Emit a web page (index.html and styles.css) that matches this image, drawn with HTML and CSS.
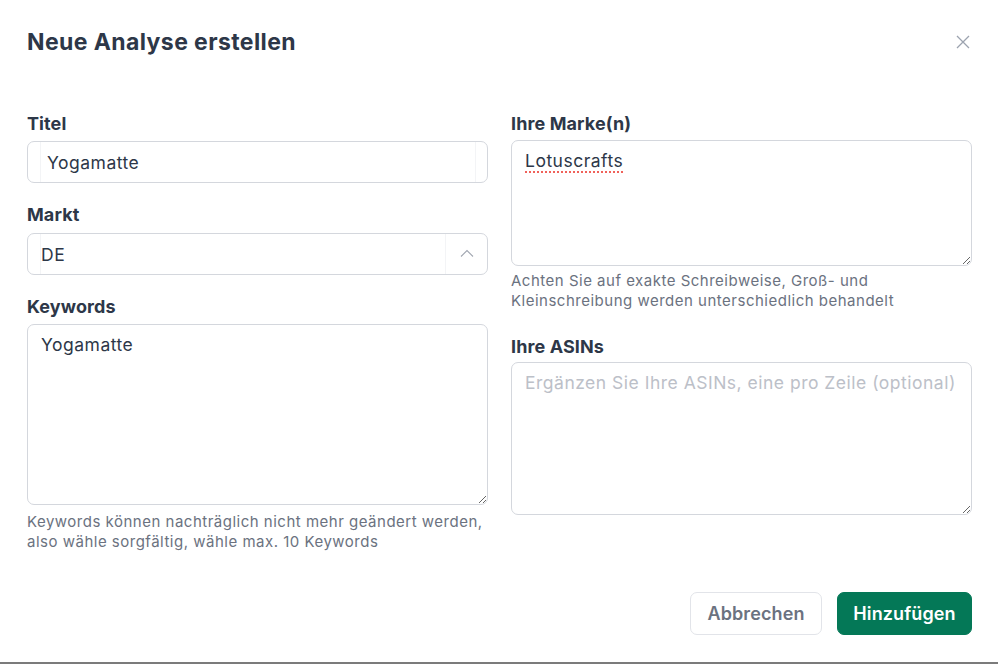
FILE: index.html
```html
<!DOCTYPE html>
<html lang="de">
<head>
<meta charset="utf-8">
<title>Neue Analyse erstellen</title>
<link rel="stylesheet" href="styles.css">
</head>
<body>
<div class="modal">
  <header class="modal-head">
    <h1 class="modal-title">Neue Analyse erstellen</h1>
    <button class="close" aria-label="Schließen">
      <svg width="14" height="14" viewBox="0 0 14 14"><path d="M1 1L13 13M13 1L1 13" stroke="#9ca3af" stroke-width="1.3" fill="none"/></svg>
    </button>
  </header>
  <div class="form">
    <div class="col">
      <label class="label">Titel</label>
      <div class="input input-title">
        <span class="edge-left"></span>
        <span class="value">Yogamatte</span>
        <span class="edge-right"></span>
      </div>
      <label class="label label-gap">Markt</label>
      <div class="input select">
        <span class="edge-left"></span>
        <span class="value">DE</span>
        <span class="chev">
          <svg width="14" height="8" viewBox="0 0 14 8"><path d="M1 7.5L7 1.5L13 7.5" stroke="#a0a6b0" stroke-width="1.1" fill="none"/></svg>
        </span>
      </div>
      <label class="label label-gap">Keywords</label>
      <div class="area area-keywords">Yogamatte</div>
      <p class="help">Keywords können nachträglich nicht mehr geändert werden, also wähle sorgfältig, wähle max. 10 Keywords</p>
    </div>
    <div class="col">
      <label class="label">Ihre Marke(n)</label>
      <div class="area area-brand"><span class="spell">Lotuscrafts</span></div>
      <p class="help help-brand">Achten Sie auf exakte Schreibweise, Groß- und Kleinschreibung werden unterschiedlich behandelt</p>
      <label class="label label-asin">Ihre ASINs</label>
      <div class="area area-asin"><span class="placeholder">Ergänzen Sie Ihre ASINs, eine pro Zeile (optional)</span></div>
    </div>
  </div>
  <footer class="actions">
    <button class="btn btn-cancel">Abbrechen</button>
    <button class="btn btn-primary">Hinzufügen</button>
  </footer>
</div>
</body>
</html>
```
FILE: styles.css
```css
* { box-sizing: border-box; }
html, body { margin: 0; padding: 0; background: #fff; }
body {
  font-family: Inter, "Liberation Sans", sans-serif;
  color: #2d3748;
}
.modal {
  width: 998px;
  height: 664px;
  padding: 0 26px 0 27px;
  border-bottom: 2px solid #7b7b7b;
  display: flex;
  flex-direction: column;
}
.modal-head {
  display: flex;
  justify-content: space-between;
  align-items: center;
  padding-top: 28px;
  height: 56px;
}
.modal-title {
  margin: 0;
  font-size: 23px;
  line-height: 28px;
  font-weight: 700;
  color: #2d3748;
  letter-spacing: 0.4px;
}
.close {
  border: 0;
  background: none;
  padding: 0;
  margin-right: 2px;
  width: 14px;
  height: 14px;
  display: flex;
}
.form {
  display: grid;
  grid-template-columns: 461px 461px;
  column-gap: 23px;
  margin-top: 56px;
}
.col { display: flex; flex-direction: column; }
.label {
  display: block;
  font-size: 18px;
  line-height: 24px;
  font-weight: 700;
  letter-spacing: 0.1px;
  color: #2d3748;
  margin-bottom: 5px;
}
.label-gap { margin-top: 20px; }
.input {
  height: 42px;
  border: 1px solid #d4d7dd;
  border-radius: 7px;
  display: flex;
  align-items: center;
  font-size: 17.5px;
  letter-spacing: 0.5px;
  color: #2d3748;
  position: relative;
}
.edge-left {
  width: 13px;
  align-self: stretch;
  border-right: 1px solid #f3f4f6;
}
.input-title .value { padding-left: 6px; flex: 1; }
.edge-right {
  width: 12px;
  align-self: stretch;
  border-left: 1px solid #f3f4f6;
}
.select { margin-top: 1px; }
.select .value { padding-left: 0; flex: 1; }
.chev {
  width: 42px;
  align-self: stretch;
  border-left: 1px solid #f3f4f6;
  display: flex;
  align-items: center;
  justify-content: center;
  padding-bottom: 3px;
}
.area {
  border: 1px solid #d4d7dd;
  border-radius: 7px;
  font-size: 17.5px;
  letter-spacing: 0.5px;
  line-height: 24px;
  padding: 8px 13px;
  resize: vertical;
  overflow: auto;
  color: #2d3748;
}
.area-keywords { height: 181px; }
.area-brand { height: 126px; margin-top: -1px; }
.area-asin { height: 153px; margin-top: -1px; }
.spell {
  text-decoration: underline dotted #f0625a;
  text-decoration-thickness: 2px;
  text-underline-offset: 4px;
}
.placeholder { color: #bcc0c8; }
.help {
  margin: 7px 0 0;
  font-size: 15px;
  letter-spacing: 0.5px;
  line-height: 20px;
  color: #6b7280;
}
.help-brand { margin-top: 5px; }
.label-asin { margin-top: 24px; margin-bottom: 4px; }
.actions {
  margin-top: auto;
  margin-bottom: 27px;
  display: flex;
  justify-content: flex-end;
  gap: 15px;
}
.btn {
  height: 43px;
  border-radius: 7px;
  font-family: Inter, "Liberation Sans", sans-serif;
  font-size: 18px;
  font-weight: 600;
  letter-spacing: 0.1px;
  padding: 0 10px;
  cursor: pointer;
}
.btn-cancel {
  background: #fff;
  border: 1px solid #e2e4e9;
  color: #6b7280;
  width: 132px;
}
.btn-primary {
  background: #047857;
  border: 1px solid #047857;
  color: #fff;
  width: 135px;
}
```
